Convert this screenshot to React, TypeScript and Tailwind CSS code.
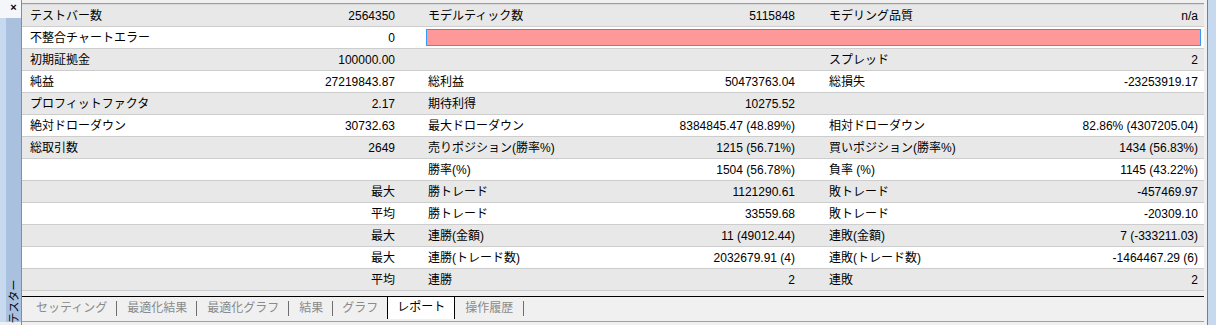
type Row = {
  cells: [string, string][];
  errorBar?: boolean;
};

const rows: Row[] = [
  { cells: [["テストバー数", "2564350"], ["モデルティック数", "5115848"], ["モデリング品質", "n/a"]] },
  { cells: [["不整合チャートエラー", "0"]], errorBar: true },
  { cells: [["初期証拠金", "100000.00"], ["", ""], ["スプレッド", "2"]] },
  { cells: [["純益", "27219843.87"], ["総利益", "50473763.04"], ["総損失", "-23253919.17"]] },
  { cells: [["プロフィットファクタ", "2.17"], ["期待利得", "10275.52"], ["", ""]] },
  { cells: [["絶対ドローダウン", "30732.63"], ["最大ドローダウン", "8384845.47 (48.89%)"], ["相対ドローダウン", "82.86% (4307205.04)"]] },
  { cells: [["総取引数", "2649"], ["売りポジション(勝率%)", "1215 (56.71%)"], ["買いポジション(勝率%)", "1434 (56.83%)"]] },
  { cells: [["", ""], ["勝率(%)", "1504 (56.78%)"], ["負率 (%)", "1145 (43.22%)"]] },
  { cells: [["", "最大"], ["勝トレード", "1121290.61"], ["敗トレード", "-457469.97"]] },
  { cells: [["", "平均"], ["勝トレード", "33559.68"], ["敗トレード", "-20309.10"]] },
  { cells: [["", "最大"], ["連勝(金額)", "11 (49012.44)"], ["連敗(金額)", "7 (-333211.03)"]] },
  { cells: [["", "最大"], ["連勝(トレード数)", "2032679.91 (4)"], ["連敗(トレード数)", "-1464467.29 (6)"]] },
  { cells: [["", "平均"], ["連勝", "2"], ["連敗", "2"]] },
];

const tabsBefore = ["セッティング", "最適化結果", "最適化グラフ", "結果"];

const cellClass = [
  "w-[400px] pl-[8px] pr-[27px]",
  "w-[400px] pl-[6px] pr-[27px]",
  "flex-1 pl-[7px] pr-[6px]",
];

function ReportRow({ row, index }: { row: Row; index: number }) {
  const shaded = index % 2 === 0;
  return (
    <div className={`flex h-[22px] border-b border-[#cdcdcd] ${shaded ? "bg-[#e8e8e8]" : "bg-white"}`}>
      {row.cells.map(([label, value], i) => (
        <div key={i} className={`flex items-center justify-between ${cellClass[i]}`}>
          <span>{label}</span>
          <span>{value}</span>
        </div>
      ))}
      {row.errorBar ? (
        <div className="flex-1 py-[2px] pl-[4px] pr-[3px]">
          <div className="h-full border border-[#3399ff] bg-[#ff9999]" />
        </div>
      ) : null}
    </div>
  );
}

export default function App() {
  return (
    <div className="flex h-[325px] w-[1216px] overflow-hidden bg-[#f0f0f0] font-['Liberation_Sans','Noto_Sans_CJK_JP',sans-serif] text-[12px] leading-none text-black">
      {/* side dock */}
      <div className="flex w-[22px] shrink-0 border-r border-[#8c8c8c]">
        <div className="flex w-[6px] flex-col">
          <div className="h-[18px] bg-[#f4f6f9]" />
          <div className="flex-1 bg-[#c6d9ef]" />
          <div className="h-[3px] bg-[#f0f0f0]" />
        </div>
        <div className="flex flex-1 flex-col">
          <div className="flex h-[18px] items-center justify-center bg-[#f4f6f9] pb-[3px] text-[11px] font-bold">×</div>
          <div className="relative flex-1 bg-[#a9c1de]">
            <span className="absolute bottom-[15px] left-1/2 -translate-x-1/2 -rotate-90 whitespace-nowrap text-[11px]">テスター</span>
          </div>
          <div className="h-[3px] bg-[#f0f0f0]" />
        </div>
      </div>

      {/* report panel */}
      <div className="flex w-[1182px] shrink-0 flex-col">
        <div className="h-[3px]" />
        <div className="h-px bg-[#9d9d9d]" />
        <div className="h-px bg-[#dadada]" />
        {rows.map((row, i) => (
          <ReportRow key={i} row={row} index={i} />
        ))}
        <div className="h-[5px]" />
        <div className="flex h-[23px] items-stretch border-t border-black pl-[4px]">
          {tabsBefore.map((tab) => (
            <div key={tab} className="flex items-center">
              <span className="pl-[10px] pr-[9px] text-[#8a8a8a]">{tab}</span>
              <span className="h-[15px] w-px bg-[#6e6e6e]" />
            </div>
          ))}
          <div className="flex items-center">
            <span className="pl-[9px] pr-[9px] text-[#8a8a8a]">グラフ</span>
          </div>
          <div className="flex items-center border-x border-black bg-white px-[9px] pb-[2px]">レポート</div>
          <div className="flex items-center">
            <span className="px-[10px] text-[#8a8a8a]">操作履歴</span>
            <span className="h-[15px] w-px bg-[#6e6e6e]" />
          </div>
        </div>
        <div className="h-[2px]" />
        <div className="h-px bg-[#a0a0a0]" />
        <div className="flex-1" />
      </div>

      {/* right edge */}
      <div className="flex flex-1">
        <div className="w-[3px] bg-[#f0f0f0]" />
        <div className="w-px bg-[#6f8199]" />
        <div className="flex-1 bg-[#c6d9ef]" />
      </div>
    </div>
  );
}
